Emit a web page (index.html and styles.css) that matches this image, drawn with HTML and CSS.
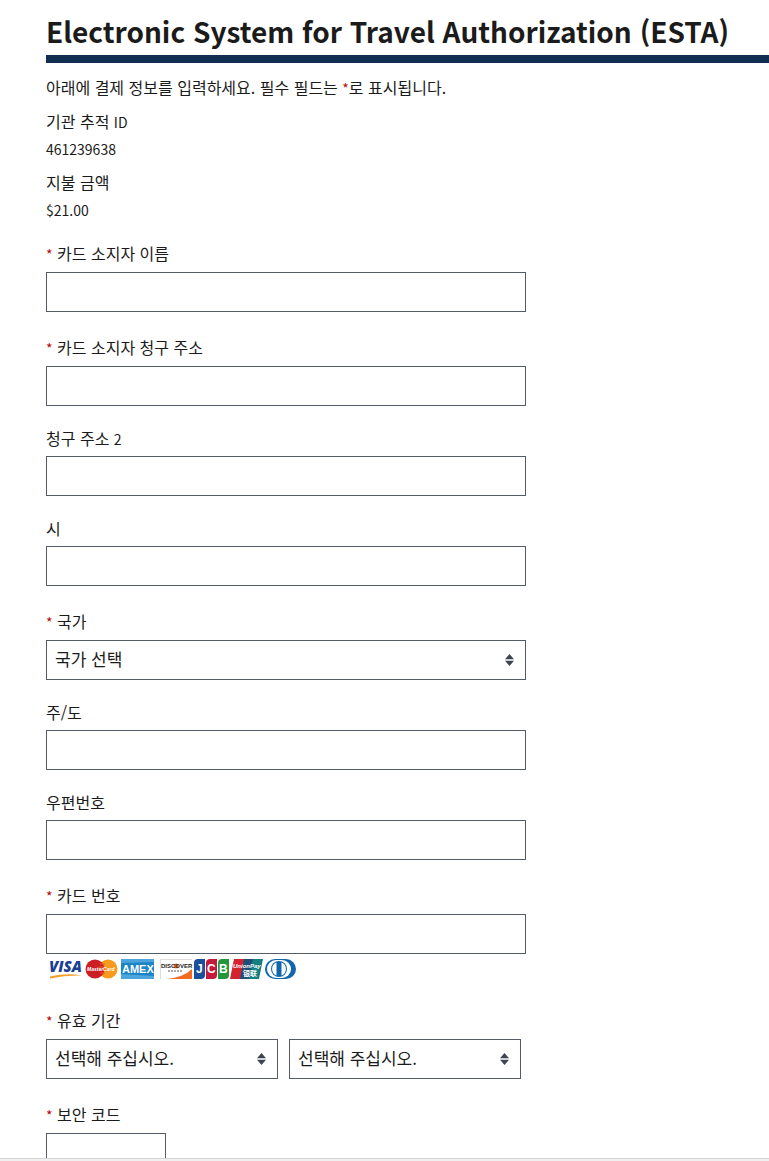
FILE: index.html
```
<!DOCTYPE html>
<html lang="ko">

<head>
    <meta charset="UTF-8">
    <meta name="viewport" content="width=device-width, initial-scale=1.0">
    <title>Electronic System for Travel Authorization (ESTA)</title>
    <link rel="stylesheet" href="styles.css">
</head>

<body>
    <main class="page">
        <h1>Electronic System for Travel Authorization (ESTA)</h1>
        <p class="intro">아래에 결제 정보를 입력하세요. 필수 필드는 <span class="star">*</span>로 표시됩니다.</p>

        <!-- Payment summary -->
        <dl class="summary">
            <dt>기관 추적 <span class="latin">ID</span></dt>
            <dd>461239638</dd>
            <dt>지불 금액</dt>
            <dd>$21.00</dd>
        </dl>

        <form class="payment-form">
            <div class="field required">
                <label for="holder-name"><span class="star">*</span> 카드 소지자 이름</label>
                <input type="text" id="holder-name">
            </div>
            <div class="field required">
                <label for="address"><span class="star">*</span> 카드 소지자 청구 주소</label>
                <input type="text" id="address">
            </div>
            <div class="field">
                <label for="address2">청구 주소 <span class="latin">2</span></label>
                <input type="text" id="address2">
            </div>
            <div class="field">
                <label for="city">시</label>
                <input type="text" id="city">
            </div>
            <div class="field required">
                <label for="country"><span class="star">*</span> 국가</label>
                <div class="select-wrap">
                    <select id="country">
                        <option>국가 선택</option>
                    </select>
                    <svg class="arrows" viewBox="0 0 9 12"><path d="M4.500 0L9 5.300H0zM0 6.700h9L4.500 12z" /></svg>
                </div>
            </div>
            <div class="field">
                <label for="state">주/도</label>
                <input type="text" id="state">
            </div>
            <div class="field">
                <label for="zip">우편번호</label>
                <input type="text" id="zip">
            </div>
            <div class="field required">
                <label for="card-number"><span class="star">*</span> 카드 번호</label>
                <input type="text" id="card-number">
            </div>

            <!-- Accepted cards -->
            <svg class="cards" viewBox="0 0 250 22" role="img" aria-label="Visa, MasterCard, Amex, Discover, JCB, UnionPay, Diners Club">
                <text class="visa" x="3" y="14">VISA</text>
                <path d="M4 18.500q16-4 32-1-16-.5-32 3z" fill="#f5a02c" />

                <circle cx="62" cy="11" r="9.500" fill="#f79b1e" />
                <circle cx="49" cy="11" r="9.500" fill="#cc1f24" />
                <path d="M54 6h5M53 9h6M53 12h6M54 15h5" stroke="#e8641f" />
                <text class="mastercard" x="41" y="13">MasterCard</text>

                <rect x="75" y="1" width="33" height="20" fill="#1d85c6" />
                <path d="M75 21v-5l33 2v3zM75 1h33v3l-33 1z" fill="#4aa5dc" />
                <text class="amex" x="76" y="15">AMEX</text>

                <path d="M114 1h32v20h-32z" fill="#fff" />
                <path d="M114.500 21V1.500H146" fill="none" stroke="#ddd" />
                <path d="M146 11v10h-25q17-2 25-10z" fill="#f26b21" />
                <circle cx="130" cy="8" r="2.500" fill="#f26b21" />
                <text class="discover" x="115" y="10">DISCOVER</text>
                <path d="M122 13h14" stroke="#555" stroke-dasharray="2 1" />

                <path d="M152 1h7v16q0 4-4 4h-7V5q0-4 4-4z" fill="#1b4f9c" />
                <path d="M164 1h7v16q0 4-4 4h-7V5q0-4 4-4z" fill="#c4183c" />
                <path d="M176 1h7v16q0 4-4 4h-7V5q0-4 4-4z" fill="#23963e" />
                <text class="jcb" x="150 161 173" y="15">JCB</text>

                <path d="M188 1h11l-4 20h-11z" fill="#d2232f" />
                <path d="M198 1h10l-4 20h-10z" fill="#1d4f78" />
                <path d="M207 1h10l-4 20h-10z" fill="#167f80" />
                <text class="unionpay" x="187" y="10">UnionPay</text>
                <text class="unionpay-cn" x="197" y="18">银联</text>

                <rect x="219" y="1" width="31" height="20" rx="10" fill="#1167ad" />
                <rect x="221" y="2" width="24" height="18" rx="9" fill="#fff" />
                <circle cx="233" cy="11" r="8" fill="#1167ad" />
                <path d="M230.500 4.500a7 7 0 000 13zM235.500 4.500a7 7 0 010 13z" fill="#fff" />
            </svg>

            <div class="field required">
                <label for="exp-month"><span class="star">*</span> 유효 기간</label>
                <div class="expiry">
                    <div class="select-wrap">
                        <select id="exp-month">
                            <option>선택해 주십시오.</option>
                        </select>
                        <svg class="arrows" viewBox="0 0 9 12"><path d="M4.500 0L9 5.300H0zM0 6.700h9L4.500 12z" /></svg>
                    </div>
                    <div class="select-wrap">
                        <select id="exp-year" aria-label="유효 기간">
                            <option>선택해 주십시오.</option>
                        </select>
                        <svg class="arrows" viewBox="0 0 9 12"><path d="M4.500 0L9 5.300H0zM0 6.700h9L4.500 12z" /></svg>
                    </div>
                </div>
            </div>
            <div class="field required">
                <label for="cvv"><span class="star">*</span> 보안 코드</label>
                <input type="text" id="cvv" class="short">
            </div>
        </form>
    </main>
    <div class="bottom-bar"></div>
</body>

</html>
```
FILE: styles.css
```
* {
    box-sizing: border-box;
}

body {
    margin: 0;
    background-color: #fff;
    color: #1b1b1b;
    font-family: "Noto Sans CJK KR", sans-serif;
    font-size: 16px;
    line-height: 22px;
}

.page {
    padding: 9px 0 24px 46px;
}

h1 {
    margin: 0;
    padding-bottom: 2px;
    border-bottom: 8px solid #112e51;
    font-size: 28px;
    line-height: 44px;
}

.intro {
    margin: 13px 0 12px;
}

.star {
    color: #b50909;
    font-size: 14px;
    line-height: 1;
}

.latin {
    font-size: 14px;
    line-height: 1;
}

/* Payment summary */
.summary {
    margin: 0;
}

.summary dd {
    margin: 9px 0 14px;
    font-size: 14px;
    line-height: 16px;
}

.summary dd:last-child {
    margin-bottom: 0;
}

/* Form fields */
.payment-form {
    max-width: 480px;
}

.field {
    display: flex;
    flex-direction: column;
    gap: 7px;
    padding-top: 21px;
}

.field.required {
    gap: 8px;
    padding-top: 24px;
}

input,
select {
    width: 100%;
    height: 40px;
    margin: 0;
    padding: 0 8px 3px;
    border: 1px solid #565c65;
    border-radius: 0;
    background-color: #fff;
    color: #1b1b1b;
    font-family: inherit;
    font-size: 17px;
}

select {
    appearance: none;
}

.short {
    width: 120px;
}

.select-wrap {
    position: relative;
}

.arrows {
    position: absolute;
    top: 14px;
    right: 12px;
    width: 9px;
    height: 12px;
    fill: #3d4551;
    pointer-events: none;
}

.expiry {
    display: grid;
    grid-template-columns: 232px 232px;
    gap: 11px;
}

/* Card logos */
.cards {
    display: block;
    width: 250px;
    height: 22px;
    margin: 4px 0 5px;
    overflow: visible;
    font-family: "Liberation Sans", sans-serif;
    font-weight: bold;
}

.visa {
    fill: #1a3f94;
    font-family: "Open Sans", sans-serif;
    font-size: 15px;
    font-style: italic;
    font-weight: 800;
}

.mastercard {
    fill: #fff;
    font-size: 5px;
    font-style: italic;
}

.amex {
    fill: #fff;
    font-size: 11px;
}

.discover {
    fill: #222;
    font-size: 6px;
}

.jcb {
    fill: #fff;
    font-size: 12px;
}

.unionpay {
    fill: #fff;
    font-size: 6px;
    font-style: italic;
}

.unionpay-cn {
    fill: #fff;
    font-family: "Noto Sans CJK SC", sans-serif;
    font-size: 7px;
}

.bottom-bar {
    position: fixed;
    right: 0;
    bottom: 0;
    left: 0;
    height: 3px;
    border-top: 1px solid #d5d5d5;
    background-color: #f0f0f0;
}
```
